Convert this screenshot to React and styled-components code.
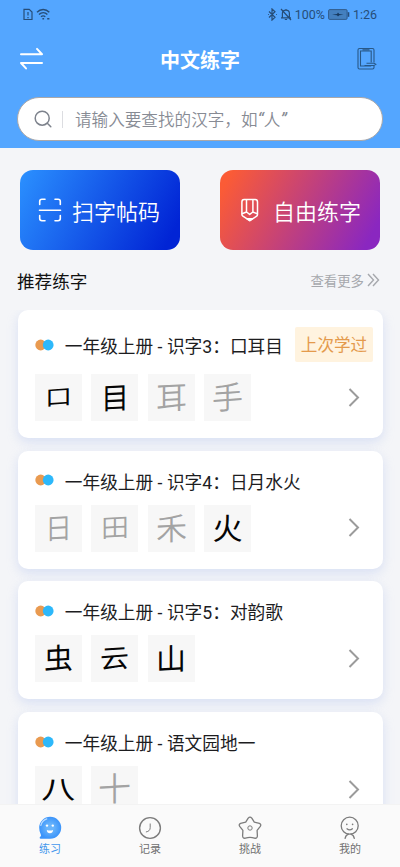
import React from "react";
import styled, { createGlobalStyle } from "styled-components";

const GlobalStyle = createGlobalStyle`
  * {
    box-sizing: border-box;
  }

  body {
    margin: 0;
    overflow: hidden;
    background: #f4f5f8;
    font-family: Roboto, "Noto Sans CJK SC", sans-serif;
  }
`;

const Screen = styled.div`
  display: flex;
  flex-direction: column;
  width: 400px;
  height: 867px;
  overflow: hidden;
  background: #f4f5f8;
`;

const Header = styled.header`
  flex: none;
  height: 148px;
  background: #54a6ff;
`;

const StatusBar = styled.div`
  display: flex;
  justify-content: space-between;
  align-items: center;
  height: 29px;
  padding: 0 23px 0 22px;
  color: #264d78;
  font-size: 12.5px;
`;

const StatusGroup = styled.div`
  display: flex;
  align-items: center;
  gap: ${({ $gap }) => $gap}px;

  svg {
    display: block;
  }
`;

const TitleBar = styled.div`
  display: flex;
  justify-content: space-between;
  align-items: center;
  height: 60px;
  padding: 0 23px 0 19px;
`;

const Title = styled.h1`
  margin: 0;
  padding: 4px 1px 0 0;
  color: #fff;
  font-size: 20px;
  line-height: 30px;
  font-weight: 700;
`;

const SearchBox = styled.div`
  display: flex;
  align-items: center;
  height: 44px;
  margin: 8px 17px 0;
  padding: 0 16px;
  border: 1px solid #aaa8aa;
  border-radius: 22px;
  background: #fff;
  color: #878b94;
  font-size: 16.6px;
  white-space: nowrap;
`;

const SearchDivider = styled.span`
  width: 1px;
  height: 17px;
  margin: 0 12px 0 10px;
  background: #dcdde1;
`;

const SearchHint = styled.span`
  font-family: "Noto Sans CJK SC", sans-serif;
  font-weight: 350;

  i {
    font-family: Roboto, sans-serif;
    font-size: 18px;
    font-weight: 400;
    line-height: 1;
  }
`;

const Actions = styled.div`
  display: flex;
  flex: none;
  justify-content: space-between;
  padding: 22px 20px 0;
`;

const ActionButton = styled.button`
  display: flex;
  align-items: center;
  width: 160px;
  height: 80px;
  padding: 0 0 0 18px;
  border: none;
  border-radius: 13px;
  background: ${({ $background }) => $background};
  color: #fff;
  font: inherit;
  font-size: 22px;
  font-weight: 350;
  gap: ${({ $gap }) => $gap}px;
  white-space: nowrap;
`;

const SectionHeader = styled.div`
  display: flex;
  flex: none;
  justify-content: space-between;
  align-items: center;
  height: 60px;
  padding: 1px 20px 0 17px;
`;

const SectionTitle = styled.h2`
  margin: 0;
  color: #111;
  font-size: 17.6px;
  font-weight: 400;
`;

const MoreLink = styled.span`
  display: flex;
  align-items: center;
  gap: 3px;
  margin-top: -1px;
  color: #a6a8ad;
  font-size: 13.4px;
`;

const List = styled.main`
  display: flex;
  flex: 1;
  flex-direction: column;
  gap: 12.7px;
  min-height: 0;
  padding: 0 17.5px;
  overflow: hidden;
`;

const Card = styled.section`
  flex: none;
  padding: 17px 9.5px 17px 17.3px;
  border-radius: 10px;
  background: #fff;
  box-shadow: 0 4px 11px rgba(174, 193, 238, 0.4);
`;

const CardHeader = styled.div`
  display: flex;
  align-items: center;
  height: ${({ $tall }) => ($tall ? 35 : 25)}px;
`;

const CardTitle = styled.h3`
  margin: 6px auto 0 11px;
  color: #1d1d1f;
  font-size: 17.7px;
  line-height: 25px;
  font-weight: 400;
  white-space: nowrap;
`;

const Badge = styled.span`
  width: 78px;
  height: 35px;
  padding-top: 1px;
  border-radius: 2px;
  background: #fff3df;
  color: #e49a4c;
  font-size: 16.6px;
  line-height: 35px;
  text-align: center;
`;

const CardBody = styled.div`
  display: flex;
  align-items: center;
  justify-content: space-between;
  margin-top: 12px;
  padding-right: 13px;
`;

const Characters = styled.div`
  display: flex;
  gap: 9.4px;
`;

const CharacterTile = styled.span`
  display: flex;
  align-items: center;
  justify-content: center;
  width: 47px;
  height: 47px;
  background: #f7f7f7;
`;

const Character = styled.span`
  color: ${({ $done }) => ($done ? "#050505" : "#a3a3a3")};
  font-family: "Noto Sans CJK SC", sans-serif;
  font-size: ${({ $size }) => $size}px;
  font-weight: ${({ $done }) => ($done ? 400 : 350)};
  line-height: 1;
  transform: translateY(-2px) skewY(${({ $slant }) => $slant}deg) scaleY(${({ $stretch }) => $stretch});
`;

const TabBar = styled.nav`
  display: flex;
  flex: none;
  height: 63px;
  border-top: 1px solid #f3f3f3;
  background: #fafafa;
`;

const Tab = styled.div`
  display: flex;
  flex: 1;
  flex-direction: column;
  align-items: center;
  padding-top: 11px;
  color: ${({ $active }) => ($active ? "#4598ed" : "#707070")};
  font-size: 11px;
  line-height: 16px;

  svg {
    display: block;
    margin-bottom: 2px;
  }
`;

const SimIcon = () => (
  <svg width="12" height="13" viewBox="0 0 12 13" fill="none" stroke="currentColor" strokeWidth="1.2">
    <path d="M2 1.3h5.2L10 4v7.5H2z" />
    <path d="M6 4v3.5M6 9v1.3" />
  </svg>
);

const WifiIcon = () => (
  <svg width="15" height="13" viewBox="0 0 15 13" fill="none" stroke="currentColor" strokeWidth="1.4">
    <path d="M1 4.3C4.5 .6 9.8.6 13.3 4.3M3 6.6c2.5-2.4 6-2.4 8.4 0M5 8.8c1.3-1.1 3-1.1 4.3 0" />
    <path d="M6.4 10.8h1.7M11.2 10.8h2.2" />
  </svg>
);

const BluetoothIcon = () => (
  <svg width="9" height="13" viewBox="0 0 9 13" fill="none" stroke="currentColor" strokeWidth="1.2">
    <path d="M1 3.5l6 5.8-3 2.8V.9l3 2.8-6 5.8M8 6.5h.8M.2 6.5H1" />
  </svg>
);

const MutedBellIcon = () => (
  <svg width="12" height="13" viewBox="0 0 12 13" fill="none" stroke="currentColor" strokeWidth="1.2">
    <path d="M2.4 9.7V5.5c0-4.4 7-4.4 7 0v4.2M1 9.8h10M4.8 11.5h2.3M1 1l10 11M6 1v1" />
  </svg>
);

const BatteryIcon = () => (
  <svg width="22" height="11" viewBox="0 0 22 11">
    <rect x="0.6" y="0.6" width="18.5" height="9.8" rx="1.2" fill="#4480bf" stroke="#315c8d" strokeWidth="1" />
    <path d="M20.5 3.2v4.6" stroke="#264d78" strokeWidth="1.6" />
    <path d="M4 5.7l5-.8 1-1.3 1.2 1.3 4.3.8-4.3.5L10 7.5 9 6.2z" fill="#17395f" />
  </svg>
);

const SwapIcon = () => (
  <svg width="25" height="24" viewBox="0 0 25 24" fill="none" stroke="#fff" strokeWidth="2" strokeLinecap="round" strokeLinejoin="round">
    <path d="M2 7.3h21l-5-5.4M23 16H2l5 5.4" />
  </svg>
);

const PhoneWriteIcon = () => (
  <svg width="20" height="24" viewBox="0 0 20 24" fill="none" stroke="#285887" strokeWidth="1.1">
    <path d="M17 15.5V3q0-1.5-1.5-1.5h-13Q1 1.5 1 3v17.5Q1 22 2.5 22h13q1.5 0 1.5-1.5V19" />
    <path d="M14.2 15.5V4H3.5v15h10.7M5.5 2.7h7" />
    <path d="M9.5 16.3H17l1.8 1-1.8 1.2H7.5" />
  </svg>
);

const SearchIcon = () => (
  <svg width="18" height="18" viewBox="0 0 18 18" fill="none" stroke="#7d828c" strokeWidth="1.5" strokeLinecap="round">
    <circle cx="8.2" cy="8.2" r="7" />
    <path d="M13.3 13.3l3.5 3.4" />
  </svg>
);

const ScanIcon = () => (
  <svg width="24" height="24" viewBox="0 0 24 24" fill="none" stroke="#fff" strokeWidth="1.6" strokeLinecap="round">
    <path d="M1.7 6.5v-3Q1.7 1.3 4 1.3h3M17 1.3h3q2.3 0 2.3 2.2v3M22.3 17.5v3q0 2.2-2.3 2.2h-3M7 22.7H4q-2.3 0-2.3-2.2v-3" />
    <path d="M1.5 12.3h21" />
  </svg>
);

const PencilIcon = () => (
  <svg width="24" height="24" viewBox="0 0 24 24" fill="none" stroke="#fff" strokeWidth="1.5" strokeLinejoin="round">
    <path d="M6.1 1.5h11.1q2.3 0 2.3 2.5v12.5q0 1-.8 1.7l-6.9 4.5-6.9-4.5q-1-.7-1-1.7V4q0-2.5 2.2-2.5z" />
    <path d="M8.5 1.8V14M14.9 1.8V14M4 15.8L8.5 14l3.2 2.4 3.2-2.4 4.5 1.8" />
    <path d="M8.8 20.7h5.9l-2.9 1.9z" fill="#fff" />
  </svg>
);

const DoubleChevronIcon = () => (
  <svg width="13" height="14" viewBox="0 0 13 14" fill="none" stroke="currentColor" strokeWidth="1.4">
    <path d="M1 1l5.5 6L1 13M6 1l5.5 6L6 13" />
  </svg>
);

const ChevronIcon = () => (
  <svg width="12" height="20" viewBox="0 0 12 20" fill="none" stroke="#9b9b9b" strokeWidth="2">
    <path d="M1.5 1l8.500 8.500L1.500 18" />
  </svg>
);

const DotsIcon = () => (
  <svg width="19" height="12" viewBox="0 0 19 12">
    <circle cx="5.7" cy="6" r="5.4" fill="#e99a50" />
    <circle cx="13.2" cy="6" r="5.4" fill="#2db8fa" />
  </svg>
);

const PracticeIcon = () => (
  <svg width="24" height="24" viewBox="0 0 24 24">
    <defs>
      <radialGradient id="face">
        <stop offset="0.3" stopColor="#69b4fb" />
        <stop offset="1" stopColor="#3b94fa" />
      </radialGradient>
    </defs>
    <path d="M1.2 11.7a11 11 0 1 1 11 11H2.5q-1.8-.5 0-2.2 1-.8.2-2.3-1.500-2.700-1.500-6.500z" fill="url(#face)" />
    <path d="M2.8 9.500q1.300-5 6-6.600" fill="none" stroke="#b9dcff" strokeWidth="1.2" strokeLinecap="round" />
    <circle cx="9" cy="9.6" r="1.2" fill="#fff" />
    <circle cx="14.8" cy="9.6" r="1.2" fill="#fff" />
    <path d="M8.8 14q3.2 1.2 6.3 0-.4 3.2-3.2 3.2T8.8 14z" fill="#fff" />
  </svg>
);

const RecordIcon = () => (
  <svg width="24" height="24" viewBox="0 0 24 24" fill="none" stroke="#7c7c7c">
    <circle cx="12" cy="12" r="10.4" strokeWidth="1.4" />
    <path d="M12.2 7.5v4.2q0 3.5-4.3 4.3" strokeWidth="1" />
  </svg>
);

const ChallengeIcon = () => (
  <svg width="24" height="24" viewBox="0 0 24 24" fill="none" stroke="#7c7c7c" strokeLinejoin="round">
    <path d="M10.2 2.1q1.8-2.1 3.6 0l2.5 4 5.1 1.300q2.200 1 .9 3l-3.200 4 .3 5.600q-.4 2.800-2.900 2.100Q12 20.500 7.500 22.100q-2.600.7-2.900-2.100l.3-5.600-3.200-4q-1.300-2 .9-3l5.100-1.300z" strokeWidth="1.3" />
    <circle cx="12" cy="12" r="2.2" />
  </svg>
);

const ProfileIcon = () => (
  <svg width="24" height="24" viewBox="0 0 24 24" fill="none" stroke="#7c7c7c" strokeWidth="1.3" strokeLinecap="round">
    <circle cx="11.7" cy="9.7" r="8.5" />
    <path d="M10.5 18.2q-2.700.8-3.400 4.100M12.900 18.200q2.700.8 3.400 4.100M9 12.800q2.700 2.200 5.400 0" />
    <path d="M8.8 8.3v.2M14.6 8.3v.2" strokeWidth="1.6" />
  </svg>
);

const lessons = [
  {
    title: "一年级上册 - 识字3：口耳目",
    recent: true,
    characters: [
      { char: "口", done: true, size: 27, slant: -4, stretch: 0.8 },
      { char: "目", done: true, size: 28, slant: -3, stretch: 1.06 },
      { char: "耳", size: 31, slant: -3 },
      { char: "手", size: 31, slant: -4 },
    ],
  },
  {
    title: "一年级上册 - 识字4：日月水火",
    characters: [
      { char: "日", size: 27, slant: -3, stretch: 1.06 },
      { char: "田", size: 28, slant: -3, stretch: 0.9 },
      { char: "禾", size: 31, slant: -3 },
      { char: "火", done: true, size: 30, slant: 0 },
    ],
  },
  {
    title: "一年级上册 - 识字5：对韵歌",
    characters: [
      { char: "虫", done: true, size: 29, slant: -3 },
      { char: "云", done: true, size: 29, slant: -4, stretch: 0.9 },
      { char: "山", done: true, size: 30, slant: -3 },
    ],
  },
  {
    title: "一年级上册 - 语文园地一",
    characters: [
      { char: "八", done: true, size: 34, slant: 0, stretch: 0.76 },
      { char: "十", size: 33, slant: -3 },
    ],
  },
];

const tabs = [
  { label: "练习", icon: <PracticeIcon />, active: true },
  { label: "记录", icon: <RecordIcon /> },
  { label: "挑战", icon: <ChallengeIcon /> },
  { label: "我的", icon: <ProfileIcon /> },
];

const LessonCard = ({ lesson }) => (
  <Card>
    <CardHeader $tall={lesson.recent}>
      <DotsIcon />
      <CardTitle>{lesson.title}</CardTitle>
      {lesson.recent && <Badge>上次学过</Badge>}
    </CardHeader>
    <CardBody>
      <Characters>
        {lesson.characters.map(({ char, done, size, slant, stretch = 1 }) => (
          <CharacterTile key={char}>
            <Character $done={done} $size={size} $slant={slant} $stretch={stretch}>
              {char}
            </Character>
          </CharacterTile>
        ))}
      </Characters>
      <ChevronIcon />
    </CardBody>
  </Card>
);

const App = () => {
  return (
    <>
      <GlobalStyle />
      <Screen>
        <Header>
          <StatusBar>
            <StatusGroup $gap={2}>
              <SimIcon />
              <WifiIcon />
            </StatusGroup>
            <StatusGroup $gap={3}>
              <BluetoothIcon />
              <MutedBellIcon />
              <span>100%</span>
              <BatteryIcon />
              <span>1:26</span>
            </StatusGroup>
          </StatusBar>
          <TitleBar>
            <SwapIcon />
            <Title>中文练字</Title>
            <PhoneWriteIcon />
          </TitleBar>
          <SearchBox>
            <SearchIcon />
            <SearchDivider />
            <SearchHint>
              请输入要查找的汉字，如<i>“</i>人<i>”</i>
            </SearchHint>
          </SearchBox>
        </Header>
        <Actions>
          <ActionButton $gap={10} $background="linear-gradient(118deg, #2b91ff 0%, #0124d5 92%)">
            <ScanIcon />
            扫字帖码
          </ActionButton>
          <ActionButton $gap={11} $background="linear-gradient(118deg, #fb5b36 6%, #8a27c0 92%)">
            <PencilIcon />
            自由练字
          </ActionButton>
        </Actions>
        <SectionHeader>
          <SectionTitle>推荐练字</SectionTitle>
          <MoreLink>
            查看更多
            <DoubleChevronIcon />
          </MoreLink>
        </SectionHeader>
        <List>
          {lessons.map((lesson) => (
            <LessonCard key={lesson.title} lesson={lesson} />
          ))}
        </List>
        <TabBar>
          {tabs.map((tab) => (
            <Tab key={tab.label} $active={tab.active}>
              {tab.icon}
              {tab.label}
            </Tab>
          ))}
        </TabBar>
      </Screen>
    </>
  );
};

export default App;
